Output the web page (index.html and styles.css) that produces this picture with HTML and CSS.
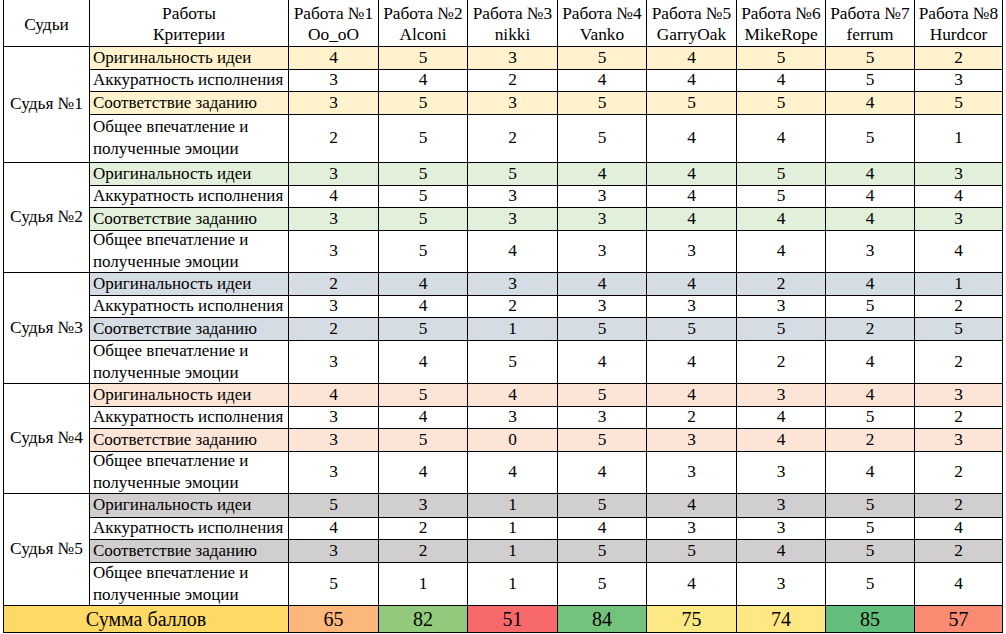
FILE: index.html
```html
<!DOCTYPE html>
<html lang="ru">
<head>
<meta charset="utf-8">
<title>Оценки судей</title>
<link rel="stylesheet" href="styles.css">
</head>
<body>
<table class="scores">
  <colgroup>
    <col class="c-judge"><col class="c-crit">
    <col class="c-w1"><col class="c-w2"><col class="c-w3"><col class="c-w4">
    <col class="c-w5"><col class="c-w6"><col class="c-w7"><col class="c-w8">
  </colgroup>
  <thead>
    <tr class="r-head">
      <th>Судьи</th>
      <th>Работы<br>Критерии</th>
      <th>Работа №1<br>Oo_oO</th>
      <th>Работа №2<br>Alconi</th>
      <th>Работа №3<br>nikki</th>
      <th>Работа №4<br>Vanko</th>
      <th>Работа №5<br>GarryOak</th>
      <th>Работа №6<br>MikeRope</th>
      <th>Работа №7<br>ferrum</th>
      <th>Работа №8<br>Hurdcor</th>
    </tr>
  </thead>
  <tbody class="j1">
    <tr class="r-a hl"><td class="judge" rowspan="4">Судья №1</td><td class="crit">Оригинальность идеи</td><td>4</td><td>5</td><td>3</td><td>5</td><td>4</td><td>5</td><td>5</td><td>2</td></tr>
    <tr class="r-b"><td class="crit">Аккуратность исполнения</td><td>3</td><td>4</td><td>2</td><td>4</td><td>4</td><td>4</td><td>5</td><td>3</td></tr>
    <tr class="r-c hl"><td class="crit">Соответствие заданию</td><td>3</td><td>5</td><td>3</td><td>5</td><td>5</td><td>5</td><td>4</td><td>5</td></tr>
    <tr class="r-d r-d1"><td class="crit"><div class="two">Общее впечатление и<br>полученные эмоции</div></td><td>2</td><td>5</td><td>2</td><td>5</td><td>4</td><td>4</td><td>5</td><td>1</td></tr>
  </tbody>
  <tbody class="j2">
    <tr class="r-a hl"><td class="judge" rowspan="4">Судья №2</td><td class="crit">Оригинальность идеи</td><td>3</td><td>5</td><td>5</td><td>4</td><td>4</td><td>5</td><td>4</td><td>3</td></tr>
    <tr class="r-b"><td class="crit">Аккуратность исполнения</td><td>4</td><td>5</td><td>3</td><td>3</td><td>4</td><td>5</td><td>4</td><td>4</td></tr>
    <tr class="r-c hl"><td class="crit">Соответствие заданию</td><td>3</td><td>5</td><td>3</td><td>3</td><td>4</td><td>4</td><td>4</td><td>3</td></tr>
    <tr class="r-d"><td class="crit"><div class="two">Общее впечатление и<br>полученные эмоции</div></td><td>3</td><td>5</td><td>4</td><td>3</td><td>3</td><td>4</td><td>3</td><td>4</td></tr>
  </tbody>
  <tbody class="j3">
    <tr class="r-a hl"><td class="judge" rowspan="4">Судья №3</td><td class="crit">Оригинальность идеи</td><td>2</td><td>4</td><td>3</td><td>4</td><td>4</td><td>2</td><td>4</td><td>1</td></tr>
    <tr class="r-b"><td class="crit">Аккуратность исполнения</td><td>3</td><td>4</td><td>2</td><td>3</td><td>3</td><td>3</td><td>5</td><td>2</td></tr>
    <tr class="r-c hl"><td class="crit">Соответствие заданию</td><td>2</td><td>5</td><td>1</td><td>5</td><td>5</td><td>5</td><td>2</td><td>5</td></tr>
    <tr class="r-d r-d43"><td class="crit"><div class="two">Общее впечатление и<br>полученные эмоции</div></td><td>3</td><td>4</td><td>5</td><td>4</td><td>4</td><td>2</td><td>4</td><td>2</td></tr>
  </tbody>
  <tbody class="j4">
    <tr class="r-a hl"><td class="judge" rowspan="4">Судья №4</td><td class="crit">Оригинальность идеи</td><td>4</td><td>5</td><td>4</td><td>5</td><td>4</td><td>3</td><td>4</td><td>3</td></tr>
    <tr class="r-b"><td class="crit">Аккуратность исполнения</td><td>3</td><td>4</td><td>3</td><td>3</td><td>2</td><td>4</td><td>5</td><td>2</td></tr>
    <tr class="r-c hl"><td class="crit">Соответствие заданию</td><td>3</td><td>5</td><td>0</td><td>5</td><td>3</td><td>4</td><td>2</td><td>3</td></tr>
    <tr class="r-d"><td class="crit"><div class="two">Общее впечатление и<br>полученные эмоции</div></td><td>3</td><td>4</td><td>4</td><td>4</td><td>3</td><td>3</td><td>4</td><td>2</td></tr>
  </tbody>
  <tbody class="j5">
    <tr class="r-a r-a5 hl"><td class="judge" rowspan="4">Судья №5</td><td class="crit">Оригинальность идеи</td><td>5</td><td>3</td><td>1</td><td>5</td><td>4</td><td>3</td><td>5</td><td>2</td></tr>
    <tr class="r-b"><td class="crit">Аккуратность исполнения</td><td>4</td><td>2</td><td>1</td><td>4</td><td>3</td><td>3</td><td>5</td><td>4</td></tr>
    <tr class="r-c hl"><td class="crit">Соответствие заданию</td><td>3</td><td>2</td><td>1</td><td>5</td><td>5</td><td>4</td><td>5</td><td>2</td></tr>
    <tr class="r-d r-d43"><td class="crit"><div class="two">Общее впечатление и<br>полученные эмоции</div></td><td>5</td><td>1</td><td>1</td><td>5</td><td>4</td><td>3</td><td>5</td><td>4</td></tr>
  </tbody>
  <tfoot>
    <tr class="r-sum">
      <td class="sum-label" colspan="2">Сумма баллов</td>
      <td style="background:#FCB77A">65</td>
      <td style="background:#92CA7D">82</td>
      <td style="background:#F8696B">51</td>
      <td style="background:#73C37C">84</td>
      <td style="background:#FCE983">75</td>
      <td style="background:#FFE883">74</td>
      <td style="background:#63BE7B">85</td>
      <td style="background:#FA8A71">57</td>
    </tr>
  </tfoot>
</table>
</body>
</html>
```

FILE: styles.css
```css
html, body {
  margin: 0;
  padding: 0;
  background: #fff;
}

body {
  padding-left: 3px;
  font-family: "Liberation Serif", "Times New Roman", serif;
  font-size: 17.33px;
  color: #000;
}

.scores {
  border-collapse: collapse;
  table-layout: fixed;
  width: 1000px;
}

.c-judge { width: 86px; }
.c-crit { width: 199px; }
.c-w1 { width: 90px; }
.c-w2 { width: 89px; }
.c-w3 { width: 90px; }
.c-w4 { width: 89px; }
.c-w5 { width: 90px; }
.c-w6 { width: 89px; }
.c-w7 { width: 89px; }
.c-w8 { width: 88px; }

.scores th,
.scores td {
  border: 1px solid #000;
  padding: 0;
  text-align: center;
  vertical-align: middle;
  line-height: 20px;
  font-weight: normal;
  white-space: nowrap;
  overflow: hidden;
}

.scores th {
  border-top: 0;
  line-height: 21px;
  padding-top: 3px;
}

.r-head { height: 46px; }
.r-a { height: 23px; }
.r-a5 { height: 24px; }
.r-b { height: 22px; }
.r-c { height: 23px; }
.r-d { height: 42px; }
.r-d43 { height: 43px; }
.r-d1 { height: 48px; }

.scores td.crit {
  text-align: left;
  padding-left: 3px;
  font-size: 17px;
}

.two {
  line-height: 22px;
  margin: -2px 0 -2px;
}

.j1 .hl td:not(.judge) { background: #FFF2CC; }
.j2 .hl td:not(.judge) { background: #E2EFDA; }
.j3 .hl td:not(.judge) { background: #D6DCE4; }
.j4 .hl td:not(.judge) { background: #FCE4D6; }
.j5 .hl td:not(.judge) { background: #D0CECE; }

.r-sum { height: 27px; }
.r-sum td {
  font-size: 20px;
  line-height: 24px;
  padding-top: 1px;
}
.scores td.sum-label {
  background: #FFD966;
}
```
